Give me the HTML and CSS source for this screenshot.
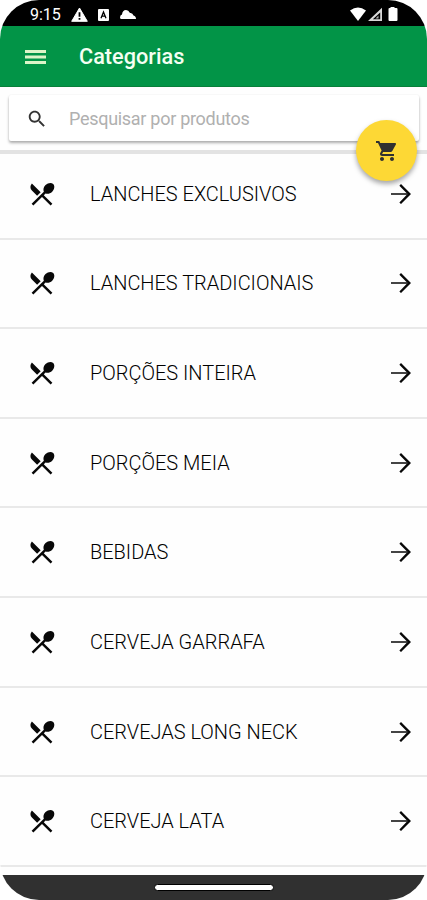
FILE: index.html
```html
<!DOCTYPE html>
<html lang="pt-BR">
<head>
<meta charset="utf-8">
<title>Categorias</title>
<link rel="stylesheet" href="styles.css">
</head>
<body>
<svg class="defs" width="0" height="0" aria-hidden="true">
  <symbol id="menu-icon" viewBox="0 0 24 24"><path d="M8.1 13.34l2.83-2.83L3.91 3.5c-1.56 1.56-1.56 4.09 0 5.66l4.19 4.18zm6.78-1.81c1.53.71 3.68.21 5.27-1.38 1.91-1.91 2.28-4.65.81-6.12-1.46-1.46-4.2-1.1-6.12.81-1.59 1.59-2.09 3.74-1.38 5.27L3.7 19.87l1.41 1.41L12 14.41l6.88 6.88 1.41-1.41L13.41 13l1.47-1.47z"/></symbol>
  <symbol id="arrow" viewBox="0 0 24 24"><path d="M4 11.200h13v1.600H4z" fill="#444"/><path d="M12 4l-1.300 1.300L17.200 12l-6.500 6.700L12 20l8-8z"/></symbol>
</svg>
<div class="phone">
  <div class="status">
    <span class="time">9:15</span>
    <svg class="warn" viewBox="0 0 17 15"><path fill="#fff" stroke="#fff" stroke-linejoin="round" d="M8.500 1L16.300 14.300H.7z"/><path fill="#000" d="M7.600 5.200h1.800v4.500H7.600zM7.600 11h1.800v1.800H7.600z"/></svg>
    <svg class="abox" viewBox="0 0 11 12"><rect width="11" height="12" rx="1" fill="#fff"/><path d="M3 9.200L5.500 3L8 9.200M4 7.200h3" fill="none" stroke="#000" stroke-width="1.300"/></svg>
    <svg class="cloud" viewBox="0 0 16 9"><path fill="#fff" d="M1.500 9Q0 9 0 7.500 0 5 2 4.500 2.500 0 6 0q2.500 0 4 3 2.500-.5 3.500 2.500Q16 6 16 9z"/></svg>
    <svg class="signals" viewBox="0 0 48 15"><g fill="#fff"><path d="M0 3.500Q8-2.500 16 3.500L8 14z"/><path fill="#d8d8d8" fill-rule="evenodd" d="M32 .8V14H18zM30.200 5.500v6.800h-7.400z"/><path fill="#aaa" d="M28.500 8.500v3h-3z"/><path d="M40.500 1V0h4v1h2q1 0 1 1v11q0 1-1 1h-7q-1 0-1-1V2q0-1 1-1z"/></g></svg>
  </div>
  <header>
    <svg class="burger" viewBox="0 0 21 14"><path fill="#dcf5c8" d="M0 0h21v3H0zM0 5.500h21v3H0zM0 11h21v3H0z"/></svg>
    <h1>Categorias</h1>
  </header>
  <div class="search-area">
    <div class="search">
      <svg viewBox="0 0 24 24"><path fill="#333" d="M15.500 14h-.79l-.28-.27C15.410 12.590 16 11.110 16 9.500 16 5.910 13.090 3 9.500 3S3 5.910 3 9.500 5.910 16 9.500 16c1.610 0 3.090-.59 4.230-1.570l.27.28v.79l5 4.990L20.490 19l-4.990-5zm-6 0C7.010 14 5 11.990 5 9.500S7.010 5 9.500 5 14 7.010 14 9.500 11.990 14 9.500 14z"/></svg>
      <span>Pesquisar por produtos</span>
    </div>
    <div class="cart"><svg viewBox="0 0 24 24"><path fill="#303030" d="M7 18c-1.100 0-1.990.9-1.990 2S5.900 22 7 22s2-.9 2-2-.9-2-2-2zM1 2v2h2l3.600 7.590-1.350 2.450c-.16.28-.25.61-.25.96 0 1.100.9 2 2 2h12v-2H7.420c-.14 0-.25-.11-.25-.25l.03-.12.9-1.630h7.450c.75 0 1.410-.41 1.750-1.030l3.580-6.490c.08-.14.12-.31.12-.48 0-.55-.45-1-1-1H5.210l-.94-2H1zm16 16c-1.100 0-1.990.9-1.990 2s.89 2 1.990 2 2-.9 2-2-.9-2-2-2z"/></svg></div>
  </div>
  <main>
    <div class="row"><svg><use href="#menu-icon"/></svg><span>LANCHES EXCLUSIVOS</span><svg><use href="#arrow"/></svg></div>
    <div class="row"><svg><use href="#menu-icon"/></svg><span>LANCHES TRADICIONAIS</span><svg><use href="#arrow"/></svg></div>
    <div class="row"><svg><use href="#menu-icon"/></svg><span>PORÇÕES INTEIRA</span><svg><use href="#arrow"/></svg></div>
    <div class="row"><svg><use href="#menu-icon"/></svg><span>PORÇÕES MEIA</span><svg><use href="#arrow"/></svg></div>
    <div class="row"><svg><use href="#menu-icon"/></svg><span>BEBIDAS</span><svg><use href="#arrow"/></svg></div>
    <div class="row"><svg><use href="#menu-icon"/></svg><span>CERVEJA GARRAFA</span><svg><use href="#arrow"/></svg></div>
    <div class="row"><svg><use href="#menu-icon"/></svg><span>CERVEJAS LONG NECK</span><svg><use href="#arrow"/></svg></div>
    <div class="row"><svg><use href="#menu-icon"/></svg><span>CERVEJA LATA</span><svg><use href="#arrow"/></svg></div>
  </main>
  <footer><div class="handle"></div></footer>
</div>
</body>
</html>
```
FILE: styles.css
```css
* { box-sizing: border-box; }
body { margin: 0; background: #fff; font-family: Roboto, sans-serif; }
.defs { position: absolute; }
svg { display: block; flex: none; }
.phone {
  width: 427px;
  height: 900px;
  overflow: hidden;
  border-radius: 39px;
  background: #fefefe;
  display: flex;
  flex-direction: column;
}
.status {
  height: 26px;
  flex: none;
  background: #000;
  color: #fff;
  display: flex;
  align-items: center;
  padding: 3px 29px 0 30px;
}
.time { width: 41px; font-size: 16px; line-height: 23px; }
.warn { width: 17px; height: 15px; }
.abox { width: 11px; height: 12px; margin-left: 10px; }
.cloud { width: 16px; height: 9px; margin-left: 11px; }
.signals { width: 48px; height: 15px; margin-left: auto; }
header {
  height: 61px;
  flex: none;
  background: #029447;
  border-bottom: 1px solid #08803a;
  display: flex;
  align-items: center;
  padding: 1px 0 0 25px;
}
.burger { width: 21px; height: 14px; }
h1 { margin: 0 0 0 33px; color: #f4fff2; font-size: 21.700px; font-weight: 500; line-height: 30px; }
.search-area {
  height: 67px;
  flex: none;
  position: relative;
  padding: 8px 8px 0 9px;
  border-bottom: 4px solid #e3e3e3;
}
.search {
  height: 46px;
  border-radius: 2px;
  background: #fff;
  box-shadow: 0 2px 3px rgba(0, 0, 0, .32), 0 0 2px rgba(0, 0, 0, .06);
  display: flex;
  align-items: center;
  padding: 1px 0 0 17px;
}
.search svg { width: 22px; height: 22px; }
.search span { margin-left: 21px; font-size: 18px; letter-spacing: -.29px; color: #b0b0b0; }
.cart {
  position: absolute;
  left: 356px;
  top: 33px;
  width: 61px;
  height: 61px;
  border-radius: 50%;
  background: #fdd835;
  box-shadow: 0 3px 5px rgba(0, 0, 0, .35);
  display: flex;
  align-items: center;
  justify-content: center;
}
.cart svg { width: 24px; height: 24px; }
main { height: 721px; flex: none; }
.row {
  height: 89.650px;
  border-bottom: 2px solid #e9e9e9;
  display: flex;
  align-items: center;
  padding: 0 11.500px 0 26.500px;
}
.row:first-child { height: 85.500px; padding-bottom: 4px; }
.row svg { width: 30px; height: 30px; fill: #080808; }
.row span { flex: 1; margin-left: 33.500px; font-size: 20px; font-weight: 300; letter-spacing: -.02px; color: #000; line-height: 28px; white-space: nowrap; }
footer {
  height: 25px;
  flex: none;
  background: #303030;
  display: flex;
  justify-content: center;
  padding-top: 9px;
}
.handle { width: 120px; height: 7px; border: 1px solid #000; border-radius: 4px; background: #fff; }
```
